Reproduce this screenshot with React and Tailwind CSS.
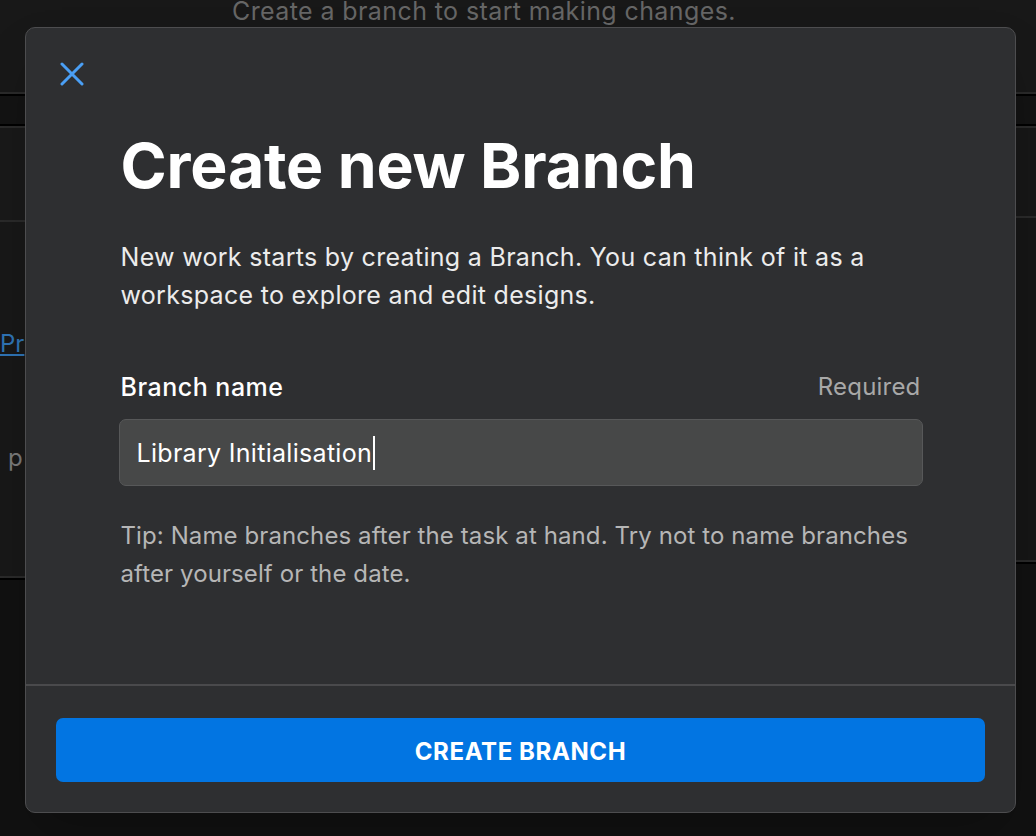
import React from "react";

const font = { fontFamily: "Inter, 'Noto Sans', sans-serif" };

function CloseIcon() {
  return (
    <svg width="24" height="24" viewBox="0 0 24 24" fill="none">
      <path d="M2 2 L22 22 M22 2 L2 22" stroke="#4a9ff5" strokeWidth="3" strokeLinecap="round" />
    </svg>
  );
}

export default function App() {
  return (
    <div className="relative w-[1036px] h-[836px] overflow-hidden bg-[#111111]" style={font}>
      {/* page underneath */}
      <div className="flex flex-col">
        <div className="h-[92px] bg-[#181818] pl-[232px]">
          <p className="-mt-[6px] text-[25px] leading-[34px] tracking-[0.4px] text-[#666666]">
            Create a branch to start making changes.
          </p>
        </div>
        <div className="h-[2px] bg-[#2a2a2a]" />
        <div className="h-[2px] bg-black" />
        <div className="h-[28px] bg-[#131313]" />
        <div className="h-[2px] bg-black" />
        <div className="h-[2px] bg-[#2a2a2a]" />
        <div className="flex">
          <div className="w-[518px] flex flex-col">
            <div className="h-[92px] bg-[#191919]" />
            <div className="h-[2px] bg-[#2a2a2a]" />
            <div className="h-[354px] bg-[#181818] flex flex-col">
              <a className="mt-[107px] text-[24px] leading-[30px] text-[#2f74b5] underline">Pr</a>
              <span className="mt-[84px] pl-[8px] text-[24px] leading-[30px] text-[#7a7a7a]">p</span>
            </div>
            <div className="h-[2px] bg-[#2a2a2a]" />
            <div className="h-[2px] bg-black" />
          </div>
          <div className="flex-1 flex flex-col">
            <div className="h-[88px] bg-[#171717]" />
            <div className="h-[2px] bg-[#2a2a2a]" />
            <div className="h-[342px] bg-[#161616]" />
            <div className="h-[2px] bg-[#2a2a2a]" />
            <div className="h-[2px] bg-black" />
          </div>
        </div>
      </div>

      {/* modal */}
      <div className="absolute left-[25px] top-[27px] w-[991px] h-[786px] rounded-[10px] border border-[#4d4d4f] bg-[#2e2f31] flex flex-col shadow-2xl">
        <div className="flex-1 flex flex-col">
          <button className="ml-[34px] mt-[34px] w-[24px] h-[24px]">
            <CloseIcon />
          </button>
          <div className="mx-auto w-[800px] flex flex-col">
            <h1 className="mt-[47px] text-[62.5px] leading-[64px] font-bold text-white tracking-[-0.2px]">
              Create new Branch
            </h1>
            <p className="mt-[41px] text-[25px] leading-[38px] tracking-[0.3px] text-[#ececec]">
              New work starts by creating a Branch. You can think of it as a workspace to explore and edit designs.
            </p>
            <div className="mt-[56px] flex items-center justify-between">
              <span className="text-[25px] leading-[34px] tracking-[0.5px] font-medium text-white">Branch name</span>
              <span className="text-[24px] leading-[34px] tracking-[0.2px] text-[#a8a8a8]">Required</span>
            </div>
            <div className="mt-[15px] -mx-[2px] h-[67px] rounded-[7px] border border-[#575859] bg-[#474848] flex items-center pl-[17px]">
              <span className="text-[25px] leading-[34px] tracking-[0.3px] text-white">Library Initialisation</span>
              <span className="ml-[1px] w-[2px] h-[34px] bg-white" />
            </div>
            <p className="mt-[31px] text-[24px] leading-[38px] tracking-[0.1px] text-[#b6b6b6]">
              Tip: Name branches after the task at hand. Try not to name branches after yourself or the date.
            </p>
          </div>
        </div>
        <div className="h-[2px] bg-[#4a4a4c]" />
        <div className="px-[30px] pt-[32px] pb-[30px]">
          <button className="w-full h-[64px] pt-[3px] rounded-[7px] bg-[#0275e2] text-white text-[24px] font-bold tracking-[0.6px] flex items-center justify-center">
            CREATE BRANCH
          </button>
        </div>
      </div>
    </div>
  );
}
